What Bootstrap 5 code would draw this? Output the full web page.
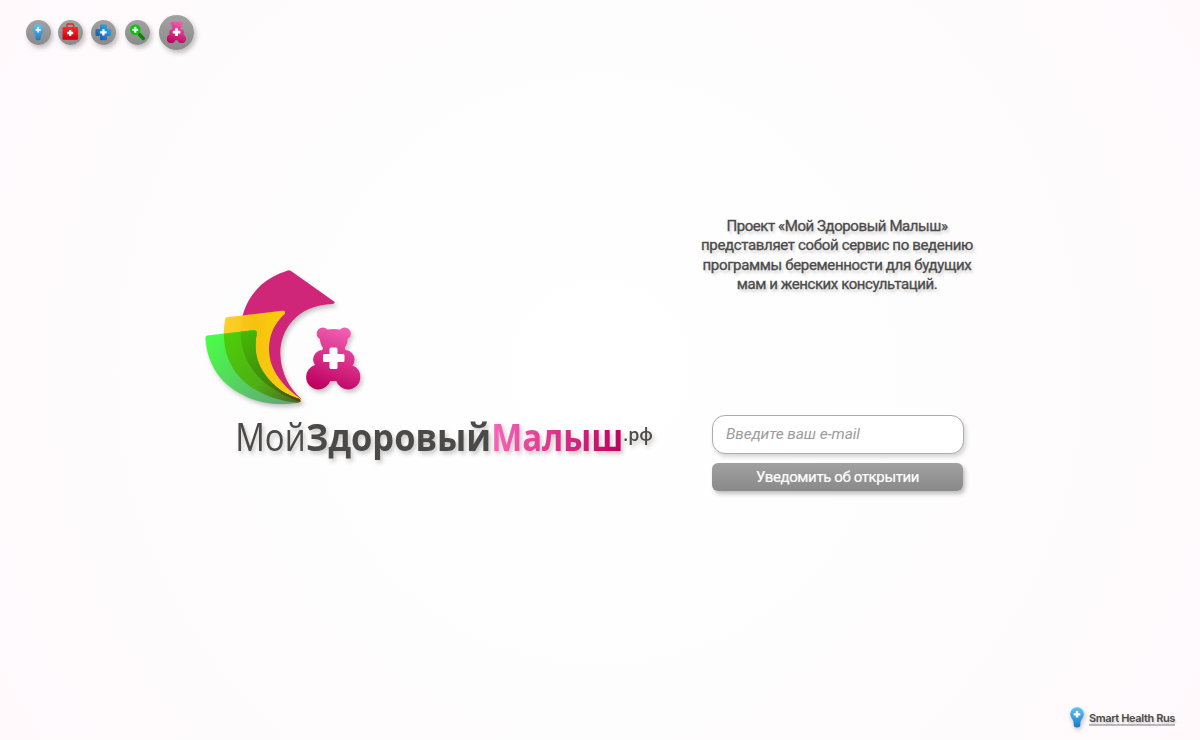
<!DOCTYPE html>
<html lang="ru">
<head>
<meta charset="utf-8">
<meta name="viewport" content="width=device-width, initial-scale=1">
<title>МойЗдоровыйМалыш.рф</title>
<link href="https://cdn.jsdelivr.net/npm/bootstrap@5.3.0/dist/css/bootstrap.min.css" rel="stylesheet">
<style>
body{font-family:Roboto,"Liberation Sans",sans-serif;color:#4b4a49;background:radial-gradient(circle at 50% 50%,#fff 0,#fefefe 30%,#fefcfd 65%,#fff9fc 100%)}
.topbar{height:65px;padding:15px 0 0 25.5px;gap:8px}
.orb{width:25px;height:25px;border-radius:50%;background:linear-gradient(#a2a2a2,#8a8a8a);box-shadow:2px 3px 5px rgba(0,0,0,.25);margin-top:5px}
.orb svg{display:block;width:100%;height:100%}
.orb-lg{width:35px;height:35px;margin:0 0 0 1px}
.stage{height:640px;padding:150px 0 0 195px}
.brandmark{width:470px;height:225px;margin-top:45px;filter:drop-shadow(2px 3px 2px rgba(0,0,0,.22))}
.panel{width:276px;margin-left:34px}
.intro{font-size:15px;font-weight:400;-webkit-text-stroke:.3px #4b4a49;line-height:19.4px;height:198px;margin:2px 0 0;text-shadow:2px 3px 3px rgba(0,0,0,.2)}
.intro span{display:block;white-space:nowrap;letter-spacing:-.34px}
.intro span:first-child{letter-spacing:-.42px}
.intro span:last-child{letter-spacing:-.42px}
.signup{width:252px;margin-left:13px}
.signup .form-control{height:39px;border:1px solid #acacac;border-radius:13px;padding:0 13px 2px;font-size:15.5px;letter-spacing:-.1px;font-style:italic;box-shadow:2px 3px 4px rgba(0,0,0,.16);background:#fff}
.signup .form-control::placeholder{color:#9c9c9c;opacity:1}
.signup .btn{width:251px;height:28px;margin-top:9px;border:0;border-radius:6px;padding:0;line-height:28px;font-size:15px;font-weight:400;letter-spacing:-.38px;-webkit-text-stroke:.2px #fff;color:#fff;background:linear-gradient(#a1a1a1,#898989);box-shadow:2px 3px 4px rgba(0,0,0,.25)}
.credit{height:35px;padding:0 25px 0 0;gap:5px}
.credit a{font:600 11px/12px Inter,sans-serif;letter-spacing:-.38px;color:#4b4a49;text-decoration:none;border-bottom:2px solid #bbb;text-shadow:1px 2px 2px rgba(0,0,0,.2)}
</style>
</head>
<body class="vh-100 overflow-hidden">
<svg width="0" height="0" class="position-absolute">
<defs>
<linearGradient id="blue" x2="0" y2="1"><stop stop-color="#5cc6f6"/><stop offset="1" stop-color="#1879c8"/></linearGradient>
<linearGradient id="bearfill" x1=".65" y1="0" x2=".35" y2="1"><stop stop-color="#f360b4"/><stop offset="1" stop-color="#bd0060"/></linearGradient>
<clipPath id="bearclip"><circle cx="17.300" cy="6.500" r="6.100"/><circle cx="39.200" cy="6.500" r="6.100"/><path d="M17 3Q28.300 1.200 39.500 3Q43.500 9 41.500 16.500Q40.500 19 38.500 21.500V26H18V21.500Q16 19 15.200 16.500Q13 9 17 3z"/><circle cx="17" cy="32.500" r="9.400"/><circle cx="39.700" cy="32.500" r="9.400"/><circle cx="13" cy="50" r="12.400"/><circle cx="42.500" cy="50" r="12.400"/><path d="M18 20h21l4 12v22H13V32z"/></clipPath>
<symbol id="bear" viewBox="0 0 56 63"><rect width="56" height="63" fill="url(#bearfill)" clip-path="url(#bearclip)"/><path d="M25.500 20.500h5q1.500 0 1.500 1.500v5h5.500q1.500 0 1.500 1.500v5q0 1.500-1.500 1.500H32v5.500q0 1.500-1.500 1.500h-5q-1.500 0-1.500-1.500V35h-5q-1.500 0-1.500-1.500v-5q0-1.500 1.500-1.500h5v-5q0-1.500 1.500-1.500z" fill="#fff"/></symbol>
<symbol id="bulb" viewBox="0 0 14 21"><path d="M7 .2a6.900 6.900 0 0 1 6.900 6.900c0 3-2.800 5-3.400 7.700l-.3 3.700c0 1.200-1.200 1.900-3.200 1.900s-3.200-.7-3.200-1.900l-.3-3.700C2.900 12.100.1 10.100.1 7.100A6.900 6.900 0 0 1 7 .2z" fill="url(#blue)"/><path d="M7 4v6.600M3.700 7.300h6.600" stroke="#fff" stroke-width="2.300"/></symbol>
</defs>
</svg>
<nav class="topbar d-flex align-items-start">
<div class="orb"><svg viewBox="0 0 25 25"><use href="#bulb" x="6.700" y="4.200" width="11" height="16.500"/></svg></div>
<div class="orb" style="margin-left:-.5px"><svg viewBox="0 0 25 25"><defs><linearGradient id="red" x2="0" y2="1"><stop stop-color="#fb2d27"/><stop offset="1" stop-color="#c80008"/></linearGradient></defs><path d="M9 8V5q0-1 1-1h4.500q1 0 1 1v3" fill="none" stroke="#dc2922" stroke-width="1.300"/><rect x="4.500" y="7" width="15.500" height="12.700" rx="1.300" fill="url(#red)"/><path d="M12.200 10v6M9.200 13h6" stroke="#fff" stroke-width="2.300"/></svg></div>
<div class="orb"><svg viewBox="0 0 25 25"><defs><linearGradient id="cross" x1="0" y1="1" x2="1" y2="0"><stop stop-color="#0c4ea7"/><stop offset="1" stop-color="#36b5f3"/></linearGradient></defs><path d="M10 4.500h5q1 0 1 1V9h3.300q1 0 1 1v5q0 1-1 1H16v3.300q0 1-1 1h-5q-1 0-1-1V16H5.500q-1 0-1-1v-5q0-1 1-1H9V5.500q0-1 1-1z" fill="url(#cross)"/><path d="M12.400 9.200v6.400M9.200 12.400h6.400" stroke="#fff" stroke-width="2.300"/></svg></div>
<div class="orb" style="margin-left:1px"><svg viewBox="0 0 25 25"><path d="M14.300 14.200l4 4.300" stroke="#078a05" stroke-width="3.600" stroke-linecap="round"/><circle cx="10.300" cy="9.800" r="5.300" fill="#05c506"/><path d="M10.300 6.800v6M7.300 9.800h6" stroke="#fff" stroke-width="2.100"/></svg></div>
<div class="orb orb-lg"><svg viewBox="0 0 35 35"><use href="#bear" x="7.500" y="6" width="20" height="22.500"/></svg></div>
</nav>
<main class="stage d-flex align-items-start">
<svg class="brandmark flex-shrink-0" viewBox="195 260 470 225">
<defs>
<linearGradient id="gold"><stop stop-color="#ffd02b"/><stop offset=".4" stop-color="#f8c513"/><stop offset="1" stop-color="#ffda0d"/></linearGradient>
<linearGradient id="leaf" gradientUnits="userSpaceOnUse" x1="210" y1="335" x2="290" y2="402"><stop stop-color="#49ff46"/><stop offset="1" stop-color="#63a47b"/></linearGradient>
<linearGradient id="mix" gradientUnits="userSpaceOnUse" x1="230" y1="330" x2="298" y2="402"><stop stop-color="#4dce09"/><stop offset=".6" stop-color="#4fae14"/><stop offset="1" stop-color="#4d6720"/></linearGradient>
<linearGradient id="dark" gradientUnits="userSpaceOnUse" x1="245" y1="330" x2="299" y2="402"><stop stop-color="#47b805"/><stop offset=".6" stop-color="#408a0b"/><stop offset="1" stop-color="#50421a"/></linearGradient>
<linearGradient id="rose" gradientUnits="userSpaceOnUse" x1="493" y1="430" x2="622" y2="450"><stop stop-color="#f865b8"/><stop offset="1" stop-color="#bd005f"/></linearGradient>
<path id="petalA" d="M286.500 271Q288.500 269.500 291 271L334 301.500Q336 303.200 332.500 304C297 305 280 330 280.300 354C281 374 290 389 301 398.500V402C270 391 241 371 240.500 332C241 301 260 279 286.500 271z"/>
<path id="petalB" d="M227 317.300L282 310.800Q286.500 310.500 284.600 314C274 324 269 335 269 349C269 371 284 387 301.500 399.500L299.500 403C258 399 223 377 223.800 332Q224 326 225.200 319Q225.500 317.500 227 317.300z"/>
<path id="petalC" d="M207 335.600L253.500 330.200Q257.500 330 256.700 334C254 348 256 361 264 373C274 388 287 395 299.500 399Q301.500 401.500 298.500 402.800C280 406 259 404 243 395C220 384 207 363 205.500 339Q205 336 207 335.600z"/>
<clipPath id="clipA"><use href="#petalA"/></clipPath><clipPath id="clipB"><use href="#petalB"/></clipPath>
</defs>
<use href="#petalA" fill="#cf2679"/><use href="#petalB" fill="url(#gold)"/>
<g clip-path="url(#clipB)"><use href="#petalA" fill="#efa900" opacity=".12"/></g>
<use href="#petalC" fill="url(#leaf)"/>
<g clip-path="url(#clipB)"><use href="#petalC" fill="url(#mix)"/></g>
<g clip-path="url(#clipA)"><use href="#petalC" fill="url(#dark)"/></g>
<use href="#bear" x="305.500" y="327" width="56" height="63"/>
<g font-family="'Open Sans','Noto Sans',sans-serif" fill="#4b4a49">
<text x="235.200" y="451" font-size="37.500" font-weight="400" textLength="70.500" lengthAdjust="spacingAndGlyphs">Мой</text>
<text x="306" y="451" font-size="37.500" font-weight="700" textLength="185" lengthAdjust="spacingAndGlyphs">Здоровый</text>
<text x="491.200" y="451" font-size="37.500" font-weight="700" fill="url(#rose)" textLength="132" lengthAdjust="spacingAndGlyphs">Малыш</text>
<text x="623.300" y="440.500" font-size="18" font-weight="600" textLength="29.700" lengthAdjust="spacingAndGlyphs">.рф</text>
</g>
</svg>
<section class="panel">
<p class="intro text-center"><span>Проект «Мой Здоровый Малыш»</span><span>представляет собой сервис по ведению</span><span>программы беременности для будущих</span><span>мам и женских консультаций.</span></p>
<form class="signup"><input type="email" class="form-control" placeholder="Введите ваш e-mail" aria-label="E-mail"><button type="button" class="btn d-block">Уведомить об открытии</button></form>
</section>
</main>
<footer class="credit d-flex justify-content-end align-items-start"><svg width="14" height="21" style="margin-top:2px;filter:drop-shadow(1px 2px 2px rgba(0,0,0,.25))"><use href="#bulb" width="14" height="21"/></svg><a href="#" style="margin-top:7px">Smart Health Rus</a></footer>
<script src="https://cdn.jsdelivr.net/npm/bootstrap@5.3.0/dist/js/bootstrap.bundle.min.js"></script>
</body>
</html>
